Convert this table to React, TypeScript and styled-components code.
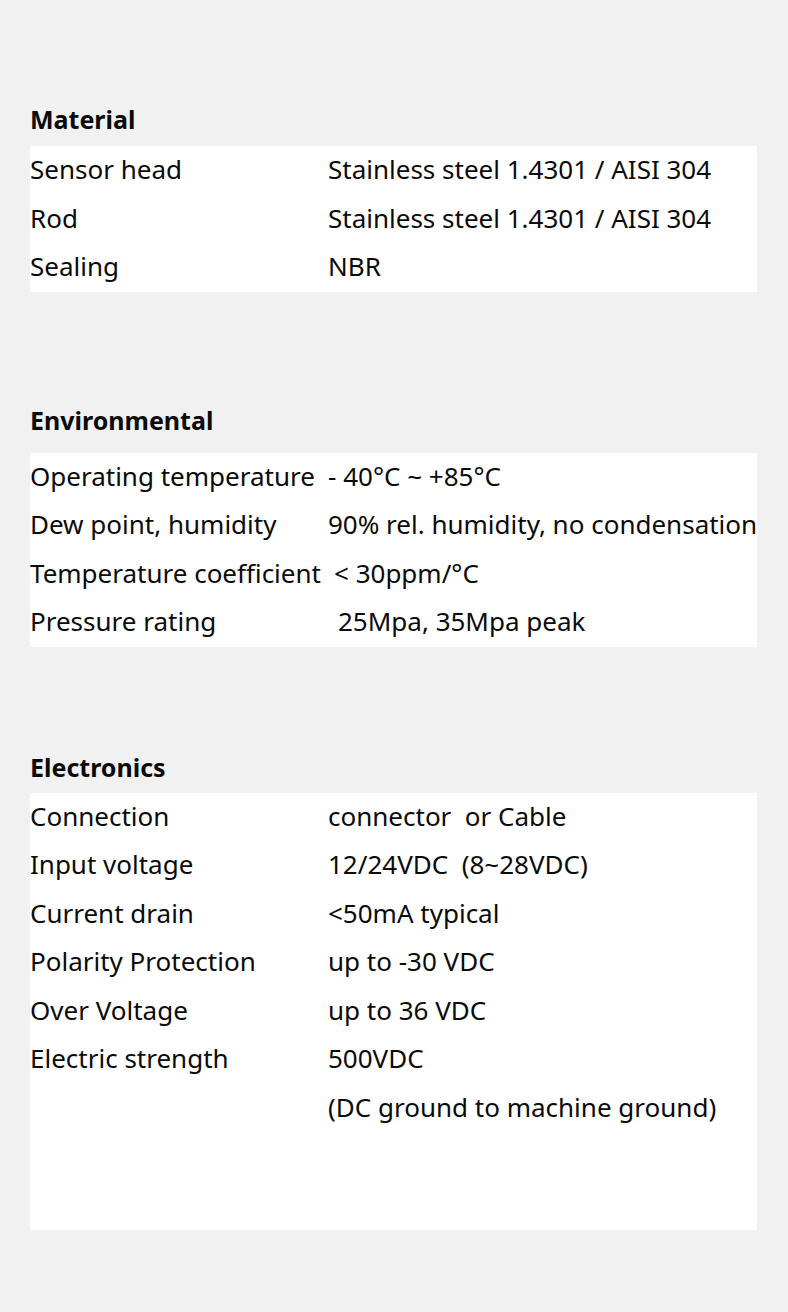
import React from "react";
import styled, { createGlobalStyle } from "styled-components";

const Global = createGlobalStyle`
  html, body { margin: 0; padding: 0; background: #f1f1f1; }
  body { font-family: "Noto Sans", "Open Sans", sans-serif; color: #0a0a0a; }
`;

const Page = styled.div`
  width: 788px;
  min-height: 1312px;
  box-sizing: border-box;
  padding: 96px 31px 0 30px;
  display: flex;
  flex-direction: column;
`;

const Section = styled.section<{ $gap: number; $after: number }>`
  display: flex;
  flex-direction: column;
  margin-bottom: ${(p) => p.$after}px;
  & > h2 { margin-bottom: ${(p) => p.$gap}px; }
`;

const Heading = styled.h2`
  margin: 0;
  font-size: 25px;
  font-weight: 700;
  line-height: 46px;
  height: 48px;
`;

const Panel = styled.div<{ $extra?: number }>`
  background: #ffffff;
  display: flex;
  flex-direction: column;
  padding-bottom: ${(p) => p.$extra ?? 0}px;
`;

const Row = styled.div`
  display: grid;
  grid-template-columns: 298px 1fr;
  height: 48.5px;
  box-sizing: border-box;
  padding-bottom: 2px;
  align-items: center;
  font-size: 26px;
  white-space: pre;
`;

const Label = styled.span``;
const Value = styled.span<{ $indent?: number }>`
  padding-left: ${(p) => p.$indent ?? 0}px;
`;

type Item = [string, string, number?];

const material: Item[] = [
  ["Sensor head", "Stainless steel 1.4301 / AISI 304"],
  ["Rod", "Stainless steel 1.4301 / AISI 304"],
  ["Sealing", "NBR"],
];
const environmental: Item[] = [
  ["Operating temperature", "- 40\u00b0C ~ +85\u00b0C"],
  ["Dew point, humidity", "90% rel. humidity, no condensation"],
  ["Temperature coefficient", "< 30ppm/\u00b0C", 6],
  ["Pressure rating", "25Mpa, 35Mpa peak", 10],
];
const electronics: Item[] = [
  ["Connection", "connector  or Cable"],
  ["Input voltage", "12/24VDC  (8~28VDC)"],
  ["Current drain", "<50mA typical"],
  ["Polarity Protection", "up to -30 VDC"],
  ["Over Voltage", "up to 36 VDC"],
  ["Electric strength", "500VDC"],
  ["", "(DC ground to machine ground)"],
];

function Rows({ items }: { items: Item[] }) {
  return (
    <>
      {items.map(([l, v, ind], i) => (
        <Row key={i}>
          <Label>{l}</Label>
          <Value $indent={ind}>{v}</Value>
        </Row>
      ))}
    </>
  );
}

export default function App() {
  return (
    <Page>
      <Global />
      <Section $gap={2} $after={105}>
        <Heading>Material</Heading>
        <Panel>
          <Rows items={material} />
        </Panel>
      </Section>
      <Section $gap={8} $after={97}>
        <Heading>Environmental</Heading>
        <Panel>
          <Rows items={environmental} />
        </Panel>
      </Section>
      <Section $gap={1} $after={0}>
        <Heading>Electronics</Heading>
        <Panel $extra={98}>
          <Rows items={electronics} />
        </Panel>
      </Section>
    </Page>
  );
}
